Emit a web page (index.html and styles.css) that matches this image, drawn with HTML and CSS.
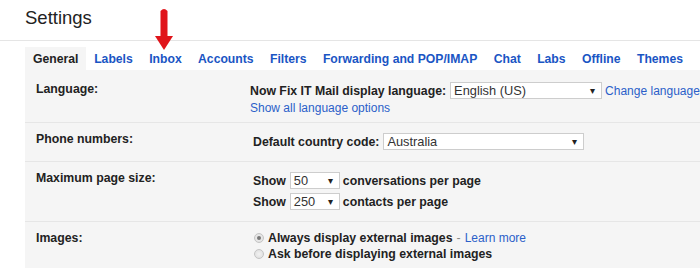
FILE: index.html
```html
<!DOCTYPE html>
<html lang="en">
  <head>
    <meta charset="UTF-8" />
    <title>Settings</title>
    <link rel="stylesheet" href="styles.css">
  </head>
  <body>
    <div class="header">
      <h1>Settings</h1>
    </div>

    <svg class="arrow" width="20" height="44" viewBox="0 0 20 44">
      <path d="M6.5 4 Q10 0 13.5 4 L13.5 30 L6.5 30 Z" fill="#e0141a" />
      <polygon points="1,29 19,29 10,43" fill="#e0141a" />
    </svg>

    <div class="panel">
      <div class="tabs">
        <span class="tab active">General</span>
        <span class="tab">Labels</span>
        <span class="tab">Inbox</span>
        <span class="tab">Accounts</span>
        <span class="tab">Filters</span>
        <span class="tab">Forwarding and POP/IMAP</span>
        <span class="tab">Chat</span>
        <span class="tab">Labs</span>
        <span class="tab">Offline</span>
        <span class="tab">Themes</span>
      </div>

      <div class="row first">
        <div class="label">Language:</div>
        <div class="value">
          <div class="line tight">
            <b>Now Fix IT Mail display language:</b>
            <span class="select lang">English (US)</span>
            <a class="link">Change language</a>
          </div>
          <div class="line text"><a class="link">Show all language options</a></div>
        </div>
      </div>

      <div class="row">
        <div class="label">Phone numbers:</div>
        <div class="value indent">
          <div class="line">
            <b>Default country code:</b>
            <span class="select country">Australia</span>
          </div>
        </div>
      </div>

      <div class="row">
        <div class="label">Maximum page size:</div>
        <div class="value indent">
          <div class="line">
            <b>Show</b>
            <span class="select small">50</span>
            <b>conversations per page</b>
          </div>
          <div class="line">
            <b>Show</b>
            <span class="select small">250</span>
            <b>contacts per page</b>
          </div>
        </div>
      </div>

      <div class="row last">
        <div class="label">Images:</div>
        <div class="value indent">
          <div class="line text">
            <span class="radio checked"></span>
            <b>Always display external images</b>
            <span class="dash">-</span>
            <a class="link">Learn more</a>
          </div>
          <div class="line text">
            <span class="radio"></span>
            <b>Ask before displaying external images</b>
          </div>
        </div>
      </div>
    </div>
  </body>
</html>
```

FILE: styles.css
```css
body {
  margin: 0;
  font-family: "Liberation Sans", Arial, sans-serif;
  color: #222;
  background: #fff;
  overflow: hidden;
}

.header {
  height: 40px;
  border-bottom: 1px solid #e5e5e5;
  padding-left: 25px;
}

h1 {
  margin: 0;
  padding-top: 6px;
  font-size: 18.5px;
  font-weight: normal;
  line-height: 24px;
  color: #222;
}

.arrow {
  position: absolute;
  left: 154px;
  top: 7px;
}

.panel {
  margin: 6px 0 0 25px;
  background: #f5f5f5;
}

.tabs {
  display: flex;
  height: 23px;
  align-items: stretch;
  background: #fff;
}

.tab {
  display: flex;
  align-items: center;
  padding: 0 8.2px;
  font-size: 12.2px;
  font-weight: bold;
  color: #1a55c4;
  white-space: nowrap;
}

.tab.active {
  background: #f5f5f5;
  color: #222;
  padding-left: 8px;
  padding-right: 7.6px;
}

.row {
  display: grid;
  grid-template-columns: 214px 1fr;
  padding: 8px 0 9px 11px;
  border-bottom: 1px solid #e6e6e6;
  font-size: 12.3px;
}

.row.first {
  padding-top: 11px;
  padding-bottom: 7px;
}

.row.last {
  border-bottom: none;
}

.label {
  font-weight: bold;
  line-height: 16px;
}

.value.indent {
  padding-left: 3px;
}

.line {
  display: flex;
  align-items: center;
  height: 21px;
  white-space: nowrap;
}

.line.tight {
  height: 19px;
}

.line.text {
  height: 16px;
}

.row.first .line.text {
  height: 15px;
}

.select {
  position: relative;
  box-sizing: border-box;
  height: 17px;
  line-height: 15px;
  border: 1px solid #cdcdcd;
  background: #fff;
  color: #333;
  font-weight: normal;
  font-size: 12.8px;
  padding-left: 3px;
  margin: 0 3px 0 4px;
}

.select::after {
  content: "\25BE";
  position: absolute;
  right: 6px;
  top: 0;
  font-size: 10px;
  color: #222;
}

.select.lang {
  width: 152px;
  margin-left: 4px;
}

.select.country {
  width: 201px;
}

.select.small {
  width: 50px;
}

.link {
  color: #2b5fc9;
  font-weight: normal;
  font-size: 12px;
}

.dash {
  color: #888;
  margin: 0 4px;
}

.radio {
  box-sizing: border-box;
  width: 10px;
  height: 10px;
  border-radius: 50%;
  border: 1px solid #c4c4c4;
  background: radial-gradient(circle, #f2f2f2, #dcdcdc);
  margin: 0 4px 0 1px;
  position: relative;
}

.radio.checked::after {
  content: "";
  position: absolute;
  left: 2px;
  top: 2px;
  width: 4px;
  height: 4px;
  border-radius: 50%;
  background: #777;
}
```
